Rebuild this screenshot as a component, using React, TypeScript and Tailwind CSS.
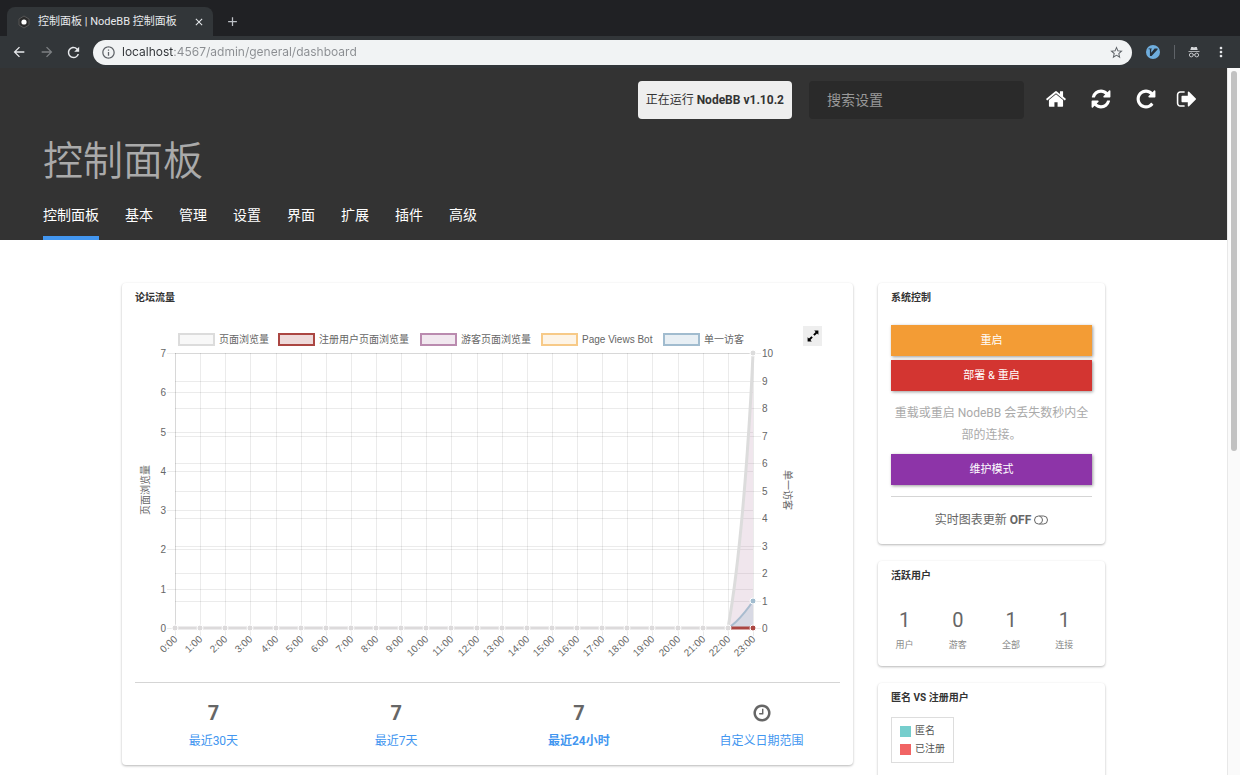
import type { ReactNode } from 'react'
import { MdAdd, MdArrowBack, MdArrowForward, MdClose, MdInfoOutline, MdMoreVert, MdRefresh, MdStarBorder } from 'react-icons/md'

type IconProps = {
  d: string,
  className?: string
}

type Series = {
  label: string,
  x: number,
  stroke: string,
  fill: string
}

type PanelProps = {
  title: string,
  className?: string,
  children: ReactNode
}

const icons = {
  home: "M1472 992v480q0 26-19 45t-45 19h-384v-384h-256v384h-384q-26 0-45-19t-19-45v-480q0-1 .5-3t.5-3l575-474 575 474q1 2 1 6zm223-69l-62 74q-8 9-21 11h-3q-13 0-21-7l-692-577-692 577q-12 8-24 7-13-2-21-11l-62-74q-8-10-7-23.5t11-21.5l719-599q32-26 76-26t76 26l244 204v-195q0-14 9-23t23-9h192q14 0 23 9t9 23v408l219 182q10 8 11 21.5t-7 23.5z",
  refresh: "M1639 1056q0 5-1 7-64 268-268 434.5t-478 166.5q-146 0-282.5-55t-243.5-157l-129 129q-19 19-45 19t-45-19-19-45v-448q0-26 19-45t45-19h448q26 0 45 19t19 45-19 45l-137 137q71 66 161 102t187 36q134 0 250-65t186-179q11-17 53-117 8-23 30-23h192q13 0 22.5 9.5t9.5 22.5zm25-800v448q0 26-19 45t-45 19h-448q-26 0-45-19t-19-45 19-45l138-138q-148-137-349-137-134 0-250 65t-186 179q-11 17-53 117-8 23-30 23h-199q-13 0-22.5-9.5t-9.5-22.5v-7q65-268 270-434.5t480-166.5q146 0 284 55.5t245 156.5l130-129q19-19 45-19t45 19 19 45z",
  repeat: "M1664 256v448q0 26-19 45t-45 19h-448q-42 0-59-40-17-39 14-69l138-138q-148-137-349-137-104 0-198.5 40.5t-163.5 109.5-109.5 163.5-40.5 198.5 40.5 198.5 109.5 163.5 163.5 109.5 198.5 40.5q119 0 225-52t179-147q7-10 23-12 15 0 25 9l137 138q9 8 9.5 20.5t-7.5 22.5q-109 132-264 204.5t-327 72.5q-156 0-298-61t-245-164-164-245-61-298 61-298 164-245 245-164 298-61q147 0 284.5 55.5t244.5 156.5l130-129q29-31 70-14 39 17 39 59z",
  signOut: "M704 1440q0 4 1 20t.5 26.5-3 23.5-10 19.5-20.5 6.5h-320q-119 0-203.5-84.5t-84.5-203.5v-704q0-119 84.5-203.5t203.5-84.5h320q13 0 22.5 9.5t9.5 22.5q0 4 1 20t.5 26.5-3 23.5-10 19.5-20.5 6.5h-320q-66 0-113 47t-47 113v704q0 66 47 113t113 47h312l11.5 1 11.5 3 8 5.5 7 9 2 13.5zm928-544q0 26-19 45l-544 544q-19 19-45 19t-45-19-19-45v-288h-448q-26 0-45-19t-19-45v-384q0-26 19-45t45-19h448v-288q0-26 19-45t45-19 45 19l544 544q19 19 19 45z",
  clock: "M1024 544v448q0 14-9 23t-23 9h-320q-14 0-23-9t-9-23v-64q0-14 9-23t23-9h224v-352q0-14 9-23t23-9h64q14 0 23 9t9 23zm416 352q0-148-73-273t-198-198-273-73-273 73-198 198-73 273 73 273 198 198 273 73 273-73 198-198 73-273zm224 0q0 209-103 385.5t-279.5 279.5-385.5 103-385.5-103-279.5-279.5-103-385.5 103-385.5 279.5-279.5 385.5-103 385.5 103 279.5 279.5 103 385.5z",
}

const menu = ["控制面板", "基本", "管理", "设置", "界面", "扩展", "插件", "高级"]

const series: Series[] = [
  { label: "页面浏览量", x: 44, stroke: "#dcdcdc", fill: "#f8f8f8" },
  { label: "注册用户页面浏览量", x: 144, stroke: "#ab4642", fill: "#eedada" },
  { label: "游客页面浏览量", x: 286, stroke: "#ba8baf", fill: "#f1e8ef" },
  { label: "Page Views Bot", x: 407, stroke: "#f7ca88", fill: "#fdf4e7" },
  { label: "单一访客", x: 529, stroke: "#a1bccf", fill: "#e8eff4" },
]

const users = [
  { count: 1, label: "用户" },
  { count: 0, label: "游客" },
  { count: 1, label: "全部" },
  { count: 1, label: "连接" },
]

// plot area inside the chart
const LEFT = 40
const RIGHT = 618
const TOP = 28
const BOTTOM = 303
const hours = Array.from({ length: 24 }, (_, i) => i)
const hourX = (i: number) => Math.round(LEFT + (i * (RIGHT - LEFT)) / 23)
const leftY = (v: number) => Math.round(BOTTOM - (v * (BOTTOM - TOP)) / 7)
const rightY = (v: number) => Math.round(BOTTOM - (v * (BOTTOM - TOP)) / 10)

function Icon({ d, className }: IconProps) {
  return (
    <svg viewBox="0 0 1792 1792" fill="currentColor" className={className} aria-hidden="true">
      <path d={d} />
    </svg>
  )
}

function Browser() {
  return (
    <div className="shrink-0 bg-[#202124] text-[#e8eaed]">
      <div className="flex h-9 items-end pl-[7px]">
        <div className="flex h-[29px] w-[206px] items-center rounded-t-lg bg-[#323639] pl-[10px] pr-2">
          <svg viewBox="0 0 14 14" className="size-[14px]" aria-hidden="true">
            <path d="M7 1l5 3v6l-5 3-5-3V4z" fill="#2b2b2b" stroke="#555" strokeWidth="1" />
            <circle cx="7" cy="7" r="2.6" fill="#fff" />
          </svg>
          <span className="ml-[7px] flex-1 whitespace-nowrap pt-px text-[11px]">控制面板 | NodeBB 控制面板</span>
          <button aria-label="关闭标签页"><MdClose className="size-3" /></button>
        </div>
        <button aria-label="新标签页" className="ml-3 flex h-[29px] items-center text-[#bdc1c6]"><MdAdd className="size-[15px]" /></button>
      </div>
      <div className="flex h-8 items-center bg-[#323639] pl-[11px] pr-[11px]">
        <button aria-label="后退"><MdArrowBack className="size-4" /></button>
        <button aria-label="前进" className="ml-3 text-[#7d8083]"><MdArrowForward className="size-4" /></button>
        <button aria-label="重新加载" className="ml-[10px]"><MdRefresh className="size-[17px]" /></button>
        <div className="ml-[11px] flex h-[25px] flex-1 items-center rounded-full bg-[#f1f3f4] pl-2 pr-2 text-[#5f6368]">
          <MdInfoOutline className="size-[15px]" />
          <input
            aria-label="地址"
            readOnly
            value="localhost:4567/admin/general/dashboard"
            className="ml-[6px] min-w-0 flex-1 bg-[linear-gradient(90deg,#2f3236_51px,#8a8d91_51px)] bg-clip-text font-[Inter,sans-serif] text-xs text-transparent outline-none"
          />
          <button aria-label="收藏"><MdStarBorder className="size-[15px]" /></button>
        </div>
        <svg viewBox="0 0 14 14" className="ml-[14px] size-[14px]" aria-hidden="true">
          <circle cx="7" cy="7" r="7" fill="#6faede" />
          <path d="M2.6 3.4h3.2v.9h-.6v3.5L8.6 3.4h3v1L5.6 11H3.9V4.3H2.6z" fill="#26313b" />
        </svg>
        <div className="ml-[14px] h-[14px] w-px bg-[#5f6368]" />
        <svg viewBox="0 0 12 12" className="ml-[13px] size-3" fill="none" stroke="#d5d7da" aria-hidden="true">
          <path d="M3.2 1h1.6l1.2.5L7.2 1h1.6l.9 3H2.3zM.5 5h11v.8H.5z" fill="#d5d7da" stroke="none" />
          <circle cx="3.3" cy="9" r="1.9" strokeWidth=".9" />
          <circle cx="8.7" cy="9" r="1.9" strokeWidth=".9" />
          <path d="M5.2 8.8q.8-.5 1.6 0" strokeWidth=".8" />
        </svg>
        <button aria-label="菜单" className="ml-[13px]"><MdMoreVert className="size-4" /></button>
      </div>
    </div>
  )
}

function Header() {
  return (
    <header className="bg-[#333] px-[29px] pt-[13px] text-white">
      <div className="flex items-center justify-end">
        <div className="flex h-[38px] items-center whitespace-nowrap rounded-sm bg-[#eee] px-2 text-xs text-[#333]">
          <span>正在运行 <strong>NodeBB v1.10.2</strong></span>
        </div>
        <input
          type="text"
          aria-label="搜索设置"
          placeholder="搜索设置"
          className="ml-[17px] h-[38px] w-[215px] rounded-sm bg-[#2a2a2a] px-[18px] text-sm placeholder:text-[#999]"
        />
        <div className="mb-0.5 ml-[21px] flex gap-[23px]">
          <a href="#" aria-label="首页"><Icon d={icons.home} className="size-[22px]" /></a>
          <a href="#" aria-label="部署"><Icon d={icons.refresh} className="size-[22px]" /></a>
          <a href="#" aria-label="重启"><Icon d={icons.repeat} className="size-[22px]" /></a>
        </div>
        <a href="#" aria-label="退出" className="mb-0.5 ml-[19px]"><Icon d={icons.signOut} className="size-[22px]" /></a>
      </div>
      <div className="px-[14px]">
        <h1 className="mt-[19px] text-[40px] font-[350] leading-[48px] text-[#aaa]">控制面板</h1>
        <nav className="mt-[17px] flex gap-[26px] text-sm leading-6">
          {menu.map((item, i) => (
            <a key={item} href="#" className={i === 0 ? "border-b-4 border-[#4296f0] pb-[9px]" : "border-b-4 border-transparent pb-[9px]"}>{item}</a>
          ))}
        </nav>
      </div>
    </header>
  )
}

function Panel({ title, className, children }: PanelProps) {
  return (
    <section className={`rounded-sm bg-white shadow-[0_1px_3px_rgba(0,0,0,0.15),0_1px_2px_rgba(0,0,0,0.15)] ${className ?? ""}`}>
      <h2 className="px-[13px] text-[10px] font-bold leading-[29px] text-[#333]">{title}</h2>
      {children}
    </section>
  )
}

function TrafficChart() {
  return (
    <svg viewBox="0 0 705 345" className="block w-full font-['Liberation_Sans','Noto_Sans_CJK_SC',sans-serif]" fontSize="10" fill="#666" role="img" aria-label="论坛流量">
      {series.map((s) => (
        <g key={s.label}>
          <rect x={s.x} y="9" width="35" height="11" fill={s.fill} stroke={s.stroke} strokeWidth="2" />
          <text x={s.x + 40} y="18">{s.label}</text>
        </g>
      ))}

      <g stroke="#000" strokeOpacity="0.08" shapeRendering="crispEdges">
        {hours.map((h) => <line key={h} x1={hourX(h)} x2={hourX(h)} y1={TOP} y2={BOTTOM + 8} />)}
        {[0, 1, 2, 3, 4, 5, 6, 7].map((v) => <line key={v} x1={LEFT - 8} x2={RIGHT} y1={leftY(v)} y2={leftY(v)} />)}
        {[0, 1, 2, 3, 4, 5, 6, 7, 8, 9, 10].map((v) => <line key={v} x1={LEFT} x2={RIGHT + 8} y1={rightY(v)} y2={rightY(v)} />)}
        <line x1={LEFT} x2={LEFT} y1={TOP} y2={BOTTOM} />
      </g>

      {[0, 1, 2, 3, 4, 5, 6, 7].map((v) => <text key={v} x="31" y={leftY(v) + 4} textAnchor="end">{v}</text>)}
      {[0, 1, 2, 3, 4, 5, 6, 7, 8, 9, 10].map((v) => <text key={v} x="627" y={rightY(v) + 4}>{v}</text>)}
      {hours.map((h) => (
        <text key={h} textAnchor="end" transform={`translate(${hourX(h) + 3} 315) rotate(-43)`}>{h}:00</text>
      ))}
      <text textAnchor="middle" transform="translate(14 165) rotate(-90)">页面浏览量</text>
      <text textAnchor="middle" transform="translate(649 165) rotate(90)">单一访客</text>

      <path d="M593 303C611 202 618 28 618 28V303Z" fill="#ba8baf" fillOpacity="0.22" />
      <path d="M593 303C605 296 618 276 618 276V303Z" fill="#a1bccf" fillOpacity="0.3" />
      <path d="M593 303C605 296 618 276 618 276" fill="none" stroke="#a9bccf" strokeWidth="2" />
      <path d="M40 303H593" stroke="#dcdadb" strokeWidth="3" />
      <path d="M593 303H618" stroke="#ab4642" strokeWidth="3" />
      <path d="M593 303C611 202 618 28 618 28" fill="none" stroke="#dcdcdc" strokeWidth="3" />
      <g stroke="#fff" strokeWidth="1">
        {hours.slice(0, 23).map((h) => <circle key={h} cx={hourX(h)} cy={BOTTOM} r="3" fill="#dcdadb" />)}
        <circle cx="618" cy="303" r="3" fill="#ab4642" />
        <circle cx="618" cy="276" r="3" fill="#a1bccf" />
        <circle cx="618" cy="28" r="3" fill="#dcdcdc" />
      </g>
    </svg>
  )
}

function Traffic() {
  return (
    <Panel title="论坛流量" className="col-span-3">
      <div className="p-[13px]">
        <div className="relative">
          <TrafficChart />
          <button aria-label="展开" className="absolute right-[18px] top-[1px] flex h-5 w-[19px] items-center justify-center bg-[#eee] text-black">
            <svg viewBox="0 0 12 12" className="size-3" aria-hidden="true">
              <path d="M7.2.6h4.2v4.2L10 3.4 7.6 5.8 6.2 4.4 8.6 2zM4.8 11.4H.6V7.2L2 8.6l2.4-2.4 1.4 1.4L3.4 10z" fill="currentColor" />
            </svg>
          </button>
        </div>
        <hr className="mt-3 border-[#d5d5d5]" />
        <div className="-mx-[13px] mt-[13px] grid grid-cols-4 text-center">
          <div>
            <div className="text-xl font-bold leading-[34px] text-[#666]">7</div>
            <a href="#" className="block text-xs leading-[22px] text-[#4296f0]">最近30天</a>
          </div>
          <div>
            <div className="text-xl font-bold leading-[34px] text-[#666]">7</div>
            <a href="#" className="block text-xs leading-[22px] text-[#4296f0]">最近7天</a>
          </div>
          <div>
            <div className="text-xl font-bold leading-[34px] text-[#666]">7</div>
            <a href="#" className="block text-xs font-bold leading-[22px] text-[#4296f0]">最近24小时</a>
          </div>
          <div>
            <div className="flex h-[34px] items-center justify-center text-[#666]"><Icon d={icons.clock} className="size-5" /></div>
            <a href="#" className="block text-xs leading-[22px] text-[#4296f0]">自定义日期范围</a>
          </div>
        </div>
      </div>
    </Panel>
  )
}

function SystemControl() {
  return (
    <Panel title="系统控制">
      <div className="p-[13px] text-center text-xs leading-[22px]">
        <button className="block h-[31px] w-full bg-[#f39c35] text-[11px] text-white shadow-[1px_1px_3px_rgba(0,0,0,0.4)]">重启</button>
        <button className="mt-1 block h-[31px] w-full bg-[#d33531] text-[11px] text-white shadow-[1px_1px_3px_rgba(0,0,0,0.4)]">部署 &amp; 重启</button>
        <p className="mb-2 mt-[11px] text-[#aaa]">重载或重启 NodeBB 会丢失数秒内全部的连接。</p>
        <button className="block h-[31px] w-full bg-[#8d34a8] text-[11px] text-white shadow-[1px_1px_3px_rgba(0,0,0,0.4)]">维护模式</button>
        <hr className="mb-3 mt-[11px] border-[#d5d5d5]" />
        <button className="inline-flex items-center text-[#666]">
          <span>实时图表更新 <strong>OFF</strong></span>
          <svg viewBox="0 0 14 10" className="ml-[3px] h-[10px] w-[14px]" fill="none" stroke="currentColor" aria-hidden="true">
            <rect x=".5" y="1" width="13" height="8" rx="4" />
            <path d="M5.5 1.2Q8.5 2 8.5 5T5.5 8.8" />
          </svg>
        </button>
      </div>
    </Panel>
  )
}

function App() {
  return (
    <div className="flex h-screen flex-col overflow-hidden bg-white font-[Roboto,'Noto_Sans_CJK_SC',sans-serif]">
      <Browser />
      <div className="flex min-h-0 flex-1">
        <div className="min-w-0 flex-1 overflow-hidden">
          <Header />
          <main className="mx-auto mt-[43px] grid max-w-[983px] grid-cols-4 items-start gap-[25px]">
            <Traffic />
            <div className="flex flex-col gap-[17px]">
              <SystemControl />
              <Panel title="活跃用户">
                <div className="grid grid-cols-4 py-[13px] pr-[14px] text-center">
                  {users.map((u) => (
                    <div key={u.label}>
                      <div className="text-xl leading-[34px] text-[#666]">{u.count}</div>
                      <div className="text-[9px] leading-4 text-[#888]">{u.label}</div>
                    </div>
                  ))}
                </div>
              </Panel>
              <Panel title="匿名 VS 注册用户">
                <div className="px-[13px] pb-[120px] pt-[5px]">
                  <ul className="inline-block border border-[#ddd] px-2 py-1 text-[10px] leading-[18px] text-[#555]">
                    <li className="flex items-center gap-1"><span className="size-[11px] bg-[#76cecd]" />匿名</li>
                    <li className="flex items-center gap-1"><span className="size-[11px] bg-[#f16464]" />已注册</li>
                  </ul>
                </div>
              </Panel>
            </div>
          </main>
        </div>
        <div className="w-[13px] shrink-0 border-l border-[#e8e8e8] bg-[#fafafa] px-[3px] pt-[3px]">
          <div className="h-[380px] rounded-full bg-[#c1c1c1]" />
        </div>
      </div>
    </div>
  )
}

export default App
